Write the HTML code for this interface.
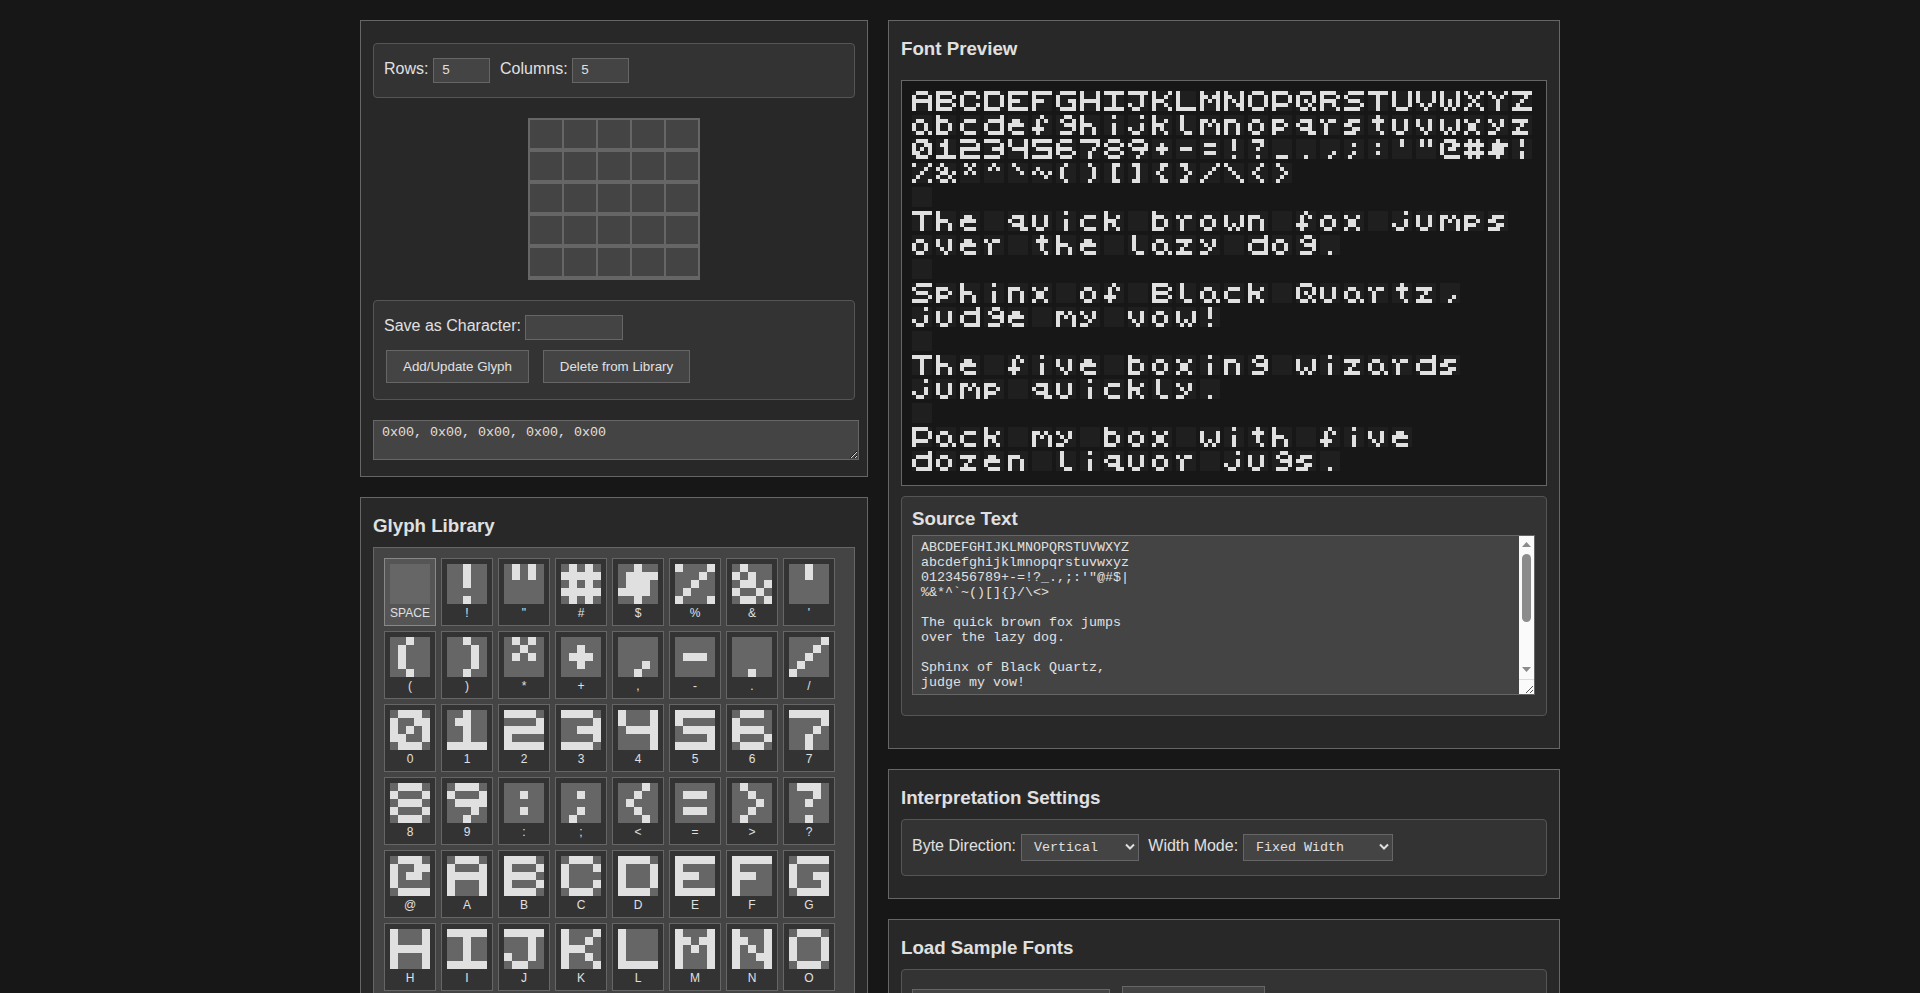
<!DOCTYPE html>
<html><head><meta charset="utf-8"><title>Pixel Font Editor</title>
<style>
html,body{margin:0;padding:0}
body{width:1920px;height:993px;overflow:hidden;background:#171717;color:#e0e0e0;font-family:"Liberation Sans",sans-serif;font-size:16px;position:relative}
*{box-sizing:border-box}
.panel{position:absolute;background:#282828;border:1px solid #666}
.box{position:absolute;background:#333;border:1px solid #555;border-radius:4px}
.abs{position:absolute}
h2{position:absolute;margin:0;font-size:18.72px;font-weight:bold;line-height:20px;white-space:nowrap}
.lbl{position:absolute;font-size:16px;line-height:18px;white-space:nowrap}
.inp{position:absolute;background:#444;border:1px solid #666;font-family:"Liberation Mono",monospace;font-size:13.333px;line-height:15px;padding:4px 8px;color:#e0e0e0;white-space:pre}
.btn{position:absolute;background:#444;border:1px solid #666;font-family:"Liberation Sans",sans-serif;font-size:13.333px;line-height:15px;padding:8px 0;color:#e0e0e0;text-align:center;white-space:nowrap}
.grid{position:absolute;left:528px;top:118px;width:172px;height:162px;background:#666}
.grid i{position:absolute;width:32px;height:28px;background:#444;display:block}
.lib{position:absolute;left:373px;top:547px;width:482px;height:600px;background:#444;border:1px solid #666;padding:10px;display:flex;flex-wrap:wrap;gap:5px;align-content:flex-start}
.gi{width:52px;height:68px;background:#333;border:1px solid #666;padding:5px;}
.gi svg{display:block}
.gi.sel{background:#555;border-color:#888}
.gl{font-size:12px;line-height:14px;margin-top:2px;text-align:center;white-space:nowrap}
.pvbox{position:absolute;left:901px;top:80px;width:646px;height:406px;background:#171717;border:1px solid #666}
.pv{position:absolute;left:10px;top:10px;display:block}
.ta{position:absolute;background:#444;border:1px solid #666;font-family:"Liberation Mono",monospace;font-size:13.333px;line-height:15px;color:#e0e0e0;white-space:pre;overflow:hidden}
.sel2{position:absolute;background:#444;border:1px solid #666;font-family:"Liberation Mono",monospace;font-size:13.333px;line-height:15px;color:#e0e0e0;white-space:pre}
</style></head><body>

<!-- left panel 1 : editor -->
<div class="panel" style="left:360px;top:20px;width:508px;height:457px"></div>
<div class="box" style="left:373px;top:43px;width:482px;height:55px"></div>
<div class="lbl" style="left:384px;top:60px">Rows:</div>
<div class="inp" style="left:433px;top:58px;width:57px;height:25px">5</div>
<div class="lbl" style="left:500px;top:60px">Columns:</div>
<div class="inp" style="left:572px;top:58px;width:57px;height:25px">5</div>
<div class="grid"><i style="left:2px;top:2px"></i><i style="left:36px;top:2px"></i><i style="left:70px;top:2px"></i><i style="left:104px;top:2px"></i><i style="left:138px;top:2px"></i><i style="left:2px;top:34px"></i><i style="left:36px;top:34px"></i><i style="left:70px;top:34px"></i><i style="left:104px;top:34px"></i><i style="left:138px;top:34px"></i><i style="left:2px;top:66px"></i><i style="left:36px;top:66px"></i><i style="left:70px;top:66px"></i><i style="left:104px;top:66px"></i><i style="left:138px;top:66px"></i><i style="left:2px;top:98px"></i><i style="left:36px;top:98px"></i><i style="left:70px;top:98px"></i><i style="left:104px;top:98px"></i><i style="left:138px;top:98px"></i><i style="left:2px;top:130px"></i><i style="left:36px;top:130px"></i><i style="left:70px;top:130px"></i><i style="left:104px;top:130px"></i><i style="left:138px;top:130px"></i></div>
<div class="box" style="left:373px;top:300px;width:482px;height:100px"></div>
<div class="lbl" style="left:384px;top:317px">Save as Character:</div>
<div class="inp" style="left:525px;top:315px;width:98px;height:25px"></div>
<div class="btn" style="left:386px;top:350px;width:143px;height:33px">Add/Update Glyph</div>
<div class="btn" style="left:543px;top:350px;width:147px;height:33px">Delete from Library</div>
<div class="ta" style="left:373px;top:420px;width:486px;height:40px;padding:4px 8px">0x00, 0x00, 0x00, 0x00, 0x00</div>
<svg class="abs" style="left:850px;top:451px" width="7" height="7" viewBox="0 0 7 7" shape-rendering="crispEdges"><path fill="#161616" d="M0 6h1v1h-1zM1 5h1v1h-1zM2 4h1v1h-1zM3 3h1v1h-1zM4 2h1v1h-1zM5 1h1v1h-1zM6 0h1v1h-1zM4 6h1v1h-1zM5 5h1v1h-1zM6 4h1v1h-1z"/><path fill="#d8d8d8" d="M1 6h1v1h-1zM2 5h1v1h-1zM3 4h1v1h-1zM4 3h1v1h-1zM5 2h1v1h-1zM6 1h1v1h-1zM5 6h1v1h-1zM6 5h1v1h-1z"/></svg>

<!-- left panel 2 : library -->
<div class="panel" style="left:360px;top:497px;width:508px;height:600px"></div>
<h2 style="left:373px;top:516px">Glyph Library</h2>
<div class="lib"><div class="gi sel"><svg width="40" height="40" viewBox="0 0 40 40" shape-rendering="crispEdges"><rect width="40" height="40" fill="#666"/><path fill="#e0e0e0" d=""/></svg><div class="gl">SPACE</div></div><div class="gi"><svg width="40" height="40" viewBox="0 0 40 40" shape-rendering="crispEdges"><rect width="40" height="40" fill="#666"/><path fill="#e0e0e0" d="M16 0h8v8h-8zM16 8h8v8h-8zM16 16h8v8h-8zM16 32h8v8h-8z"/></svg><div class="gl">!</div></div><div class="gi"><svg width="40" height="40" viewBox="0 0 40 40" shape-rendering="crispEdges"><rect width="40" height="40" fill="#666"/><path fill="#e0e0e0" d="M8 0h8v8h-8zM24 0h8v8h-8zM8 8h8v8h-8zM24 8h8v8h-8z"/></svg><div class="gl">&quot;</div></div><div class="gi"><svg width="40" height="40" viewBox="0 0 40 40" shape-rendering="crispEdges"><rect width="40" height="40" fill="#666"/><path fill="#e0e0e0" d="M8 0h8v8h-8zM24 0h8v8h-8zM0 8h40v8h-40zM8 16h8v8h-8zM24 16h8v8h-8zM0 24h40v8h-40zM8 32h8v8h-8zM24 32h8v8h-8z"/></svg><div class="gl">#</div></div><div class="gi"><svg width="40" height="40" viewBox="0 0 40 40" shape-rendering="crispEdges"><rect width="40" height="40" fill="#666"/><path fill="#e0e0e0" d="M16 0h8v8h-8zM8 8h32v8h-32zM8 16h24v8h-24zM0 24h32v8h-32zM16 32h8v8h-8z"/></svg><div class="gl">$</div></div><div class="gi"><svg width="40" height="40" viewBox="0 0 40 40" shape-rendering="crispEdges"><rect width="40" height="40" fill="#666"/><path fill="#e0e0e0" d="M0 0h8v8h-8zM32 0h8v8h-8zM24 8h8v8h-8zM16 16h8v8h-8zM8 24h8v8h-8zM0 32h8v8h-8zM32 32h8v8h-8z"/></svg><div class="gl">%</div></div><div class="gi"><svg width="40" height="40" viewBox="0 0 40 40" shape-rendering="crispEdges"><rect width="40" height="40" fill="#666"/><path fill="#e0e0e0" d="M8 0h8v8h-8zM0 8h8v8h-8zM16 8h8v8h-8zM8 16h16v8h-16zM32 16h8v8h-8zM0 24h8v8h-8zM24 24h8v8h-8zM8 32h16v8h-16zM32 32h8v8h-8z"/></svg><div class="gl">&amp;</div></div><div class="gi"><svg width="40" height="40" viewBox="0 0 40 40" shape-rendering="crispEdges"><rect width="40" height="40" fill="#666"/><path fill="#e0e0e0" d="M16 0h8v8h-8zM16 8h8v8h-8z"/></svg><div class="gl">&#x27;</div></div><div class="gi"><svg width="40" height="40" viewBox="0 0 40 40" shape-rendering="crispEdges"><rect width="40" height="40" fill="#666"/><path fill="#e0e0e0" d="M16 0h8v8h-8zM8 8h8v8h-8zM8 16h8v8h-8zM8 24h8v8h-8zM16 32h8v8h-8z"/></svg><div class="gl">(</div></div><div class="gi"><svg width="40" height="40" viewBox="0 0 40 40" shape-rendering="crispEdges"><rect width="40" height="40" fill="#666"/><path fill="#e0e0e0" d="M16 0h8v8h-8zM24 8h8v8h-8zM24 16h8v8h-8zM24 24h8v8h-8zM16 32h8v8h-8z"/></svg><div class="gl">)</div></div><div class="gi"><svg width="40" height="40" viewBox="0 0 40 40" shape-rendering="crispEdges"><rect width="40" height="40" fill="#666"/><path fill="#e0e0e0" d="M8 0h8v8h-8zM24 0h8v8h-8zM16 8h8v8h-8zM8 16h8v8h-8zM24 16h8v8h-8z"/></svg><div class="gl">*</div></div><div class="gi"><svg width="40" height="40" viewBox="0 0 40 40" shape-rendering="crispEdges"><rect width="40" height="40" fill="#666"/><path fill="#e0e0e0" d="M16 8h8v8h-8zM8 16h24v8h-24zM16 24h8v8h-8z"/></svg><div class="gl">+</div></div><div class="gi"><svg width="40" height="40" viewBox="0 0 40 40" shape-rendering="crispEdges"><rect width="40" height="40" fill="#666"/><path fill="#e0e0e0" d="M24 24h8v8h-8zM16 32h8v8h-8z"/></svg><div class="gl">,</div></div><div class="gi"><svg width="40" height="40" viewBox="0 0 40 40" shape-rendering="crispEdges"><rect width="40" height="40" fill="#666"/><path fill="#e0e0e0" d="M8 16h24v8h-24z"/></svg><div class="gl">-</div></div><div class="gi"><svg width="40" height="40" viewBox="0 0 40 40" shape-rendering="crispEdges"><rect width="40" height="40" fill="#666"/><path fill="#e0e0e0" d="M16 32h8v8h-8z"/></svg><div class="gl">.</div></div><div class="gi"><svg width="40" height="40" viewBox="0 0 40 40" shape-rendering="crispEdges"><rect width="40" height="40" fill="#666"/><path fill="#e0e0e0" d="M32 0h8v8h-8zM24 8h8v8h-8zM16 16h8v8h-8zM8 24h8v8h-8zM0 32h8v8h-8z"/></svg><div class="gl">/</div></div><div class="gi"><svg width="40" height="40" viewBox="0 0 40 40" shape-rendering="crispEdges"><rect width="40" height="40" fill="#666"/><path fill="#e0e0e0" d="M8 0h24v8h-24zM0 8h8v8h-8zM24 8h16v8h-16zM0 16h8v8h-8zM16 16h8v8h-8zM32 16h8v8h-8zM0 24h16v8h-16zM32 24h8v8h-8zM8 32h24v8h-24z"/></svg><div class="gl">0</div></div><div class="gi"><svg width="40" height="40" viewBox="0 0 40 40" shape-rendering="crispEdges"><rect width="40" height="40" fill="#666"/><path fill="#e0e0e0" d="M16 0h8v8h-8zM8 8h16v8h-16zM16 16h8v8h-8zM16 24h8v8h-8zM0 32h40v8h-40z"/></svg><div class="gl">1</div></div><div class="gi"><svg width="40" height="40" viewBox="0 0 40 40" shape-rendering="crispEdges"><rect width="40" height="40" fill="#666"/><path fill="#e0e0e0" d="M0 0h32v8h-32zM32 8h8v8h-8zM0 16h40v8h-40zM0 24h8v8h-8zM0 32h40v8h-40z"/></svg><div class="gl">2</div></div><div class="gi"><svg width="40" height="40" viewBox="0 0 40 40" shape-rendering="crispEdges"><rect width="40" height="40" fill="#666"/><path fill="#e0e0e0" d="M0 0h32v8h-32zM32 8h8v8h-8zM16 16h24v8h-24zM32 24h8v8h-8zM0 32h32v8h-32z"/></svg><div class="gl">3</div></div><div class="gi"><svg width="40" height="40" viewBox="0 0 40 40" shape-rendering="crispEdges"><rect width="40" height="40" fill="#666"/><path fill="#e0e0e0" d="M0 0h8v8h-8zM32 0h8v8h-8zM0 8h8v8h-8zM32 8h8v8h-8zM8 16h32v8h-32zM32 24h8v8h-8zM32 32h8v8h-8z"/></svg><div class="gl">4</div></div><div class="gi"><svg width="40" height="40" viewBox="0 0 40 40" shape-rendering="crispEdges"><rect width="40" height="40" fill="#666"/><path fill="#e0e0e0" d="M0 0h40v8h-40zM0 8h8v8h-8zM8 16h32v8h-32zM32 24h8v8h-8zM0 32h40v8h-40z"/></svg><div class="gl">5</div></div><div class="gi"><svg width="40" height="40" viewBox="0 0 40 40" shape-rendering="crispEdges"><rect width="40" height="40" fill="#666"/><path fill="#e0e0e0" d="M8 0h24v8h-24zM0 8h8v8h-8zM0 16h32v8h-32zM0 24h8v8h-8zM32 24h8v8h-8zM8 32h24v8h-24z"/></svg><div class="gl">6</div></div><div class="gi"><svg width="40" height="40" viewBox="0 0 40 40" shape-rendering="crispEdges"><rect width="40" height="40" fill="#666"/><path fill="#e0e0e0" d="M0 0h40v8h-40zM32 8h8v8h-8zM24 16h8v8h-8zM16 24h8v8h-8zM16 32h8v8h-8z"/></svg><div class="gl">7</div></div><div class="gi"><svg width="40" height="40" viewBox="0 0 40 40" shape-rendering="crispEdges"><rect width="40" height="40" fill="#666"/><path fill="#e0e0e0" d="M8 0h24v8h-24zM0 8h8v8h-8zM32 8h8v8h-8zM8 16h24v8h-24zM0 24h8v8h-8zM32 24h8v8h-8zM8 32h24v8h-24z"/></svg><div class="gl">8</div></div><div class="gi"><svg width="40" height="40" viewBox="0 0 40 40" shape-rendering="crispEdges"><rect width="40" height="40" fill="#666"/><path fill="#e0e0e0" d="M8 0h24v8h-24zM0 8h8v8h-8zM32 8h8v8h-8zM8 16h32v8h-32zM24 24h8v8h-8zM16 32h8v8h-8z"/></svg><div class="gl">9</div></div><div class="gi"><svg width="40" height="40" viewBox="0 0 40 40" shape-rendering="crispEdges"><rect width="40" height="40" fill="#666"/><path fill="#e0e0e0" d="M16 8h8v8h-8zM16 24h8v8h-8z"/></svg><div class="gl">:</div></div><div class="gi"><svg width="40" height="40" viewBox="0 0 40 40" shape-rendering="crispEdges"><rect width="40" height="40" fill="#666"/><path fill="#e0e0e0" d="M16 8h8v8h-8zM16 24h8v8h-8zM8 32h8v8h-8z"/></svg><div class="gl">;</div></div><div class="gi"><svg width="40" height="40" viewBox="0 0 40 40" shape-rendering="crispEdges"><rect width="40" height="40" fill="#666"/><path fill="#e0e0e0" d="M24 0h8v8h-8zM16 8h8v8h-8zM8 16h8v8h-8zM16 24h8v8h-8zM24 32h8v8h-8z"/></svg><div class="gl">&lt;</div></div><div class="gi"><svg width="40" height="40" viewBox="0 0 40 40" shape-rendering="crispEdges"><rect width="40" height="40" fill="#666"/><path fill="#e0e0e0" d="M8 8h24v8h-24zM8 24h24v8h-24z"/></svg><div class="gl">=</div></div><div class="gi"><svg width="40" height="40" viewBox="0 0 40 40" shape-rendering="crispEdges"><rect width="40" height="40" fill="#666"/><path fill="#e0e0e0" d="M8 0h8v8h-8zM16 8h8v8h-8zM24 16h8v8h-8zM16 24h8v8h-8zM8 32h8v8h-8z"/></svg><div class="gl">&gt;</div></div><div class="gi"><svg width="40" height="40" viewBox="0 0 40 40" shape-rendering="crispEdges"><rect width="40" height="40" fill="#666"/><path fill="#e0e0e0" d="M8 0h24v8h-24zM24 8h8v8h-8zM16 16h8v8h-8zM16 32h8v8h-8z"/></svg><div class="gl">?</div></div><div class="gi"><svg width="40" height="40" viewBox="0 0 40 40" shape-rendering="crispEdges"><rect width="40" height="40" fill="#666"/><path fill="#e0e0e0" d="M8 0h24v8h-24zM0 8h8v8h-8zM24 8h16v8h-16zM0 16h8v8h-8zM16 16h16v8h-16zM0 24h8v8h-8zM8 32h32v8h-32z"/></svg><div class="gl">@</div></div><div class="gi"><svg width="40" height="40" viewBox="0 0 40 40" shape-rendering="crispEdges"><rect width="40" height="40" fill="#666"/><path fill="#e0e0e0" d="M8 0h24v8h-24zM0 8h8v8h-8zM32 8h8v8h-8zM0 16h40v8h-40zM0 24h8v8h-8zM32 24h8v8h-8zM0 32h8v8h-8zM32 32h8v8h-8z"/></svg><div class="gl">A</div></div><div class="gi"><svg width="40" height="40" viewBox="0 0 40 40" shape-rendering="crispEdges"><rect width="40" height="40" fill="#666"/><path fill="#e0e0e0" d="M0 0h32v8h-32zM0 8h8v8h-8zM32 8h8v8h-8zM0 16h32v8h-32zM0 24h8v8h-8zM32 24h8v8h-8zM0 32h32v8h-32z"/></svg><div class="gl">B</div></div><div class="gi"><svg width="40" height="40" viewBox="0 0 40 40" shape-rendering="crispEdges"><rect width="40" height="40" fill="#666"/><path fill="#e0e0e0" d="M8 0h24v8h-24zM0 8h8v8h-8zM32 8h8v8h-8zM0 16h8v8h-8zM0 24h8v8h-8zM32 24h8v8h-8zM8 32h24v8h-24z"/></svg><div class="gl">C</div></div><div class="gi"><svg width="40" height="40" viewBox="0 0 40 40" shape-rendering="crispEdges"><rect width="40" height="40" fill="#666"/><path fill="#e0e0e0" d="M0 0h32v8h-32zM0 8h8v8h-8zM32 8h8v8h-8zM0 16h8v8h-8zM32 16h8v8h-8zM0 24h8v8h-8zM32 24h8v8h-8zM0 32h32v8h-32z"/></svg><div class="gl">D</div></div><div class="gi"><svg width="40" height="40" viewBox="0 0 40 40" shape-rendering="crispEdges"><rect width="40" height="40" fill="#666"/><path fill="#e0e0e0" d="M0 0h40v8h-40zM0 8h8v8h-8zM0 16h24v8h-24zM0 24h8v8h-8zM0 32h40v8h-40z"/></svg><div class="gl">E</div></div><div class="gi"><svg width="40" height="40" viewBox="0 0 40 40" shape-rendering="crispEdges"><rect width="40" height="40" fill="#666"/><path fill="#e0e0e0" d="M0 0h40v8h-40zM0 8h8v8h-8zM0 16h24v8h-24zM0 24h8v8h-8zM0 32h8v8h-8z"/></svg><div class="gl">F</div></div><div class="gi"><svg width="40" height="40" viewBox="0 0 40 40" shape-rendering="crispEdges"><rect width="40" height="40" fill="#666"/><path fill="#e0e0e0" d="M8 0h32v8h-32zM0 8h8v8h-8zM0 16h8v8h-8zM24 16h16v8h-16zM0 24h8v8h-8zM32 24h8v8h-8zM8 32h32v8h-32z"/></svg><div class="gl">G</div></div><div class="gi"><svg width="40" height="40" viewBox="0 0 40 40" shape-rendering="crispEdges"><rect width="40" height="40" fill="#666"/><path fill="#e0e0e0" d="M0 0h8v8h-8zM32 0h8v8h-8zM0 8h8v8h-8zM32 8h8v8h-8zM0 16h40v8h-40zM0 24h8v8h-8zM32 24h8v8h-8zM0 32h8v8h-8zM32 32h8v8h-8z"/></svg><div class="gl">H</div></div><div class="gi"><svg width="40" height="40" viewBox="0 0 40 40" shape-rendering="crispEdges"><rect width="40" height="40" fill="#666"/><path fill="#e0e0e0" d="M0 0h40v8h-40zM16 8h8v8h-8zM16 16h8v8h-8zM16 24h8v8h-8zM0 32h40v8h-40z"/></svg><div class="gl">I</div></div><div class="gi"><svg width="40" height="40" viewBox="0 0 40 40" shape-rendering="crispEdges"><rect width="40" height="40" fill="#666"/><path fill="#e0e0e0" d="M0 0h40v8h-40zM24 8h8v8h-8zM24 16h8v8h-8zM0 24h8v8h-8zM24 24h8v8h-8zM8 32h16v8h-16z"/></svg><div class="gl">J</div></div><div class="gi"><svg width="40" height="40" viewBox="0 0 40 40" shape-rendering="crispEdges"><rect width="40" height="40" fill="#666"/><path fill="#e0e0e0" d="M0 0h8v8h-8zM32 0h8v8h-8zM0 8h8v8h-8zM24 8h8v8h-8zM0 16h24v8h-24zM0 24h8v8h-8zM24 24h8v8h-8zM0 32h8v8h-8zM32 32h8v8h-8z"/></svg><div class="gl">K</div></div><div class="gi"><svg width="40" height="40" viewBox="0 0 40 40" shape-rendering="crispEdges"><rect width="40" height="40" fill="#666"/><path fill="#e0e0e0" d="M0 0h8v8h-8zM0 8h8v8h-8zM0 16h8v8h-8zM0 24h8v8h-8zM0 32h40v8h-40z"/></svg><div class="gl">L</div></div><div class="gi"><svg width="40" height="40" viewBox="0 0 40 40" shape-rendering="crispEdges"><rect width="40" height="40" fill="#666"/><path fill="#e0e0e0" d="M0 0h8v8h-8zM32 0h8v8h-8zM0 8h16v8h-16zM24 8h16v8h-16zM0 16h8v8h-8zM16 16h8v8h-8zM32 16h8v8h-8zM0 24h8v8h-8zM32 24h8v8h-8zM0 32h8v8h-8zM32 32h8v8h-8z"/></svg><div class="gl">M</div></div><div class="gi"><svg width="40" height="40" viewBox="0 0 40 40" shape-rendering="crispEdges"><rect width="40" height="40" fill="#666"/><path fill="#e0e0e0" d="M0 0h8v8h-8zM32 0h8v8h-8zM0 8h16v8h-16zM32 8h8v8h-8zM0 16h8v8h-8zM16 16h8v8h-8zM32 16h8v8h-8zM0 24h8v8h-8zM24 24h16v8h-16zM0 32h8v8h-8zM32 32h8v8h-8z"/></svg><div class="gl">N</div></div><div class="gi"><svg width="40" height="40" viewBox="0 0 40 40" shape-rendering="crispEdges"><rect width="40" height="40" fill="#666"/><path fill="#e0e0e0" d="M8 0h24v8h-24zM0 8h8v8h-8zM32 8h8v8h-8zM0 16h8v8h-8zM32 16h8v8h-8zM0 24h8v8h-8zM32 24h8v8h-8zM8 32h24v8h-24z"/></svg><div class="gl">O</div></div><div class="gi"><svg width="40" height="40" viewBox="0 0 40 40" shape-rendering="crispEdges"><rect width="40" height="40" fill="#666"/><path fill="#e0e0e0" d="M0 0h32v8h-32zM0 8h8v8h-8zM32 8h8v8h-8zM0 16h8v8h-8zM32 16h8v8h-8zM0 24h32v8h-32zM0 32h8v8h-8z"/></svg><div class="gl">P</div></div><div class="gi"><svg width="40" height="40" viewBox="0 0 40 40" shape-rendering="crispEdges"><rect width="40" height="40" fill="#666"/><path fill="#e0e0e0" d="M8 0h24v8h-24zM0 8h8v8h-8zM32 8h8v8h-8zM0 16h8v8h-8zM16 16h8v8h-8zM32 16h8v8h-8zM0 24h8v8h-8zM24 24h8v8h-8zM8 32h16v8h-16zM32 32h8v8h-8z"/></svg><div class="gl">Q</div></div><div class="gi"><svg width="40" height="40" viewBox="0 0 40 40" shape-rendering="crispEdges"><rect width="40" height="40" fill="#666"/><path fill="#e0e0e0" d="M0 0h32v8h-32zM0 8h8v8h-8zM32 8h8v8h-8zM0 16h32v8h-32zM0 24h8v8h-8zM24 24h8v8h-8zM0 32h8v8h-8zM32 32h8v8h-8z"/></svg><div class="gl">R</div></div><div class="gi"><svg width="40" height="40" viewBox="0 0 40 40" shape-rendering="crispEdges"><rect width="40" height="40" fill="#666"/><path fill="#e0e0e0" d="M8 0h32v8h-32zM0 8h8v8h-8zM8 16h24v8h-24zM32 24h8v8h-8zM0 32h32v8h-32z"/></svg><div class="gl">S</div></div><div class="gi"><svg width="40" height="40" viewBox="0 0 40 40" shape-rendering="crispEdges"><rect width="40" height="40" fill="#666"/><path fill="#e0e0e0" d="M0 0h40v8h-40zM16 8h8v8h-8zM16 16h8v8h-8zM16 24h8v8h-8zM16 32h8v8h-8z"/></svg><div class="gl">T</div></div><div class="gi"><svg width="40" height="40" viewBox="0 0 40 40" shape-rendering="crispEdges"><rect width="40" height="40" fill="#666"/><path fill="#e0e0e0" d="M0 0h8v8h-8zM32 0h8v8h-8zM0 8h8v8h-8zM32 8h8v8h-8zM0 16h8v8h-8zM32 16h8v8h-8zM0 24h8v8h-8zM32 24h8v8h-8zM8 32h24v8h-24z"/></svg><div class="gl">U</div></div><div class="gi"><svg width="40" height="40" viewBox="0 0 40 40" shape-rendering="crispEdges"><rect width="40" height="40" fill="#666"/><path fill="#e0e0e0" d="M0 0h8v8h-8zM32 0h8v8h-8zM0 8h8v8h-8zM32 8h8v8h-8zM0 16h8v8h-8zM32 16h8v8h-8zM8 24h8v8h-8zM24 24h8v8h-8zM16 32h8v8h-8z"/></svg><div class="gl">V</div></div><div class="gi"><svg width="40" height="40" viewBox="0 0 40 40" shape-rendering="crispEdges"><rect width="40" height="40" fill="#666"/><path fill="#e0e0e0" d="M0 0h8v8h-8zM32 0h8v8h-8zM0 8h8v8h-8zM32 8h8v8h-8zM0 16h8v8h-8zM16 16h8v8h-8zM32 16h8v8h-8zM0 24h8v8h-8zM16 24h8v8h-8zM32 24h8v8h-8zM8 32h8v8h-8zM24 32h8v8h-8z"/></svg><div class="gl">W</div></div></div>

<!-- right panel 1 : preview -->
<div class="panel" style="left:888px;top:20px;width:672px;height:729px"></div>
<h2 style="left:901px;top:39px">Font Preview</h2>
<div class="pvbox"><svg class="pv" width="624" height="384" viewBox="0 0 624 384" shape-rendering="crispEdges"><path fill="#1f1f1f" d="M0 0h20v20h-20zM24 0h20v20h-20zM48 0h20v20h-20zM72 0h20v20h-20zM96 0h20v20h-20zM120 0h20v20h-20zM144 0h20v20h-20zM168 0h20v20h-20zM192 0h20v20h-20zM216 0h20v20h-20zM240 0h20v20h-20zM264 0h20v20h-20zM288 0h20v20h-20zM312 0h20v20h-20zM336 0h20v20h-20zM360 0h20v20h-20zM384 0h20v20h-20zM408 0h20v20h-20zM432 0h20v20h-20zM456 0h20v20h-20zM480 0h20v20h-20zM504 0h20v20h-20zM528 0h20v20h-20zM552 0h20v20h-20zM576 0h20v20h-20zM600 0h20v20h-20zM0 24h20v20h-20zM24 24h20v20h-20zM48 24h20v20h-20zM72 24h20v20h-20zM96 24h20v20h-20zM120 24h20v20h-20zM144 24h20v20h-20zM168 24h20v20h-20zM192 24h20v20h-20zM216 24h20v20h-20zM240 24h20v20h-20zM264 24h20v20h-20zM288 24h20v20h-20zM312 24h20v20h-20zM336 24h20v20h-20zM360 24h20v20h-20zM384 24h20v20h-20zM408 24h20v20h-20zM432 24h20v20h-20zM456 24h20v20h-20zM480 24h20v20h-20zM504 24h20v20h-20zM528 24h20v20h-20zM552 24h20v20h-20zM576 24h20v20h-20zM600 24h20v20h-20zM0 48h20v20h-20zM24 48h20v20h-20zM48 48h20v20h-20zM72 48h20v20h-20zM96 48h20v20h-20zM120 48h20v20h-20zM144 48h20v20h-20zM168 48h20v20h-20zM192 48h20v20h-20zM216 48h20v20h-20zM240 48h20v20h-20zM264 48h20v20h-20zM288 48h20v20h-20zM312 48h20v20h-20zM336 48h20v20h-20zM360 48h20v20h-20zM384 48h20v20h-20zM408 48h20v20h-20zM432 48h20v20h-20zM456 48h20v20h-20zM480 48h20v20h-20zM504 48h20v20h-20zM528 48h20v20h-20zM552 48h20v20h-20zM576 48h20v20h-20zM600 48h20v20h-20zM0 72h20v20h-20zM24 72h20v20h-20zM48 72h20v20h-20zM72 72h20v20h-20zM96 72h20v20h-20zM120 72h20v20h-20zM144 72h20v20h-20zM168 72h20v20h-20zM192 72h20v20h-20zM216 72h20v20h-20zM240 72h20v20h-20zM264 72h20v20h-20zM288 72h20v20h-20zM312 72h20v20h-20zM336 72h20v20h-20zM360 72h20v20h-20zM0 96h20v20h-20zM0 120h20v20h-20zM24 120h20v20h-20zM48 120h20v20h-20zM72 120h20v20h-20zM96 120h20v20h-20zM120 120h20v20h-20zM144 120h20v20h-20zM168 120h20v20h-20zM192 120h20v20h-20zM216 120h20v20h-20zM240 120h20v20h-20zM264 120h20v20h-20zM288 120h20v20h-20zM312 120h20v20h-20zM336 120h20v20h-20zM360 120h20v20h-20zM384 120h20v20h-20zM408 120h20v20h-20zM432 120h20v20h-20zM456 120h20v20h-20zM480 120h20v20h-20zM504 120h20v20h-20zM528 120h20v20h-20zM552 120h20v20h-20zM576 120h20v20h-20zM0 144h20v20h-20zM24 144h20v20h-20zM48 144h20v20h-20zM72 144h20v20h-20zM96 144h20v20h-20zM120 144h20v20h-20zM144 144h20v20h-20zM168 144h20v20h-20zM192 144h20v20h-20zM216 144h20v20h-20zM240 144h20v20h-20zM264 144h20v20h-20zM288 144h20v20h-20zM312 144h20v20h-20zM336 144h20v20h-20zM360 144h20v20h-20zM384 144h20v20h-20zM408 144h20v20h-20zM0 168h20v20h-20zM0 192h20v20h-20zM24 192h20v20h-20zM48 192h20v20h-20zM72 192h20v20h-20zM96 192h20v20h-20zM120 192h20v20h-20zM144 192h20v20h-20zM168 192h20v20h-20zM192 192h20v20h-20zM216 192h20v20h-20zM240 192h20v20h-20zM264 192h20v20h-20zM288 192h20v20h-20zM312 192h20v20h-20zM336 192h20v20h-20zM360 192h20v20h-20zM384 192h20v20h-20zM408 192h20v20h-20zM432 192h20v20h-20zM456 192h20v20h-20zM480 192h20v20h-20zM504 192h20v20h-20zM528 192h20v20h-20zM0 216h20v20h-20zM24 216h20v20h-20zM48 216h20v20h-20zM72 216h20v20h-20zM96 216h20v20h-20zM120 216h20v20h-20zM144 216h20v20h-20zM168 216h20v20h-20zM192 216h20v20h-20zM216 216h20v20h-20zM240 216h20v20h-20zM264 216h20v20h-20zM288 216h20v20h-20zM0 240h20v20h-20zM0 264h20v20h-20zM24 264h20v20h-20zM48 264h20v20h-20zM72 264h20v20h-20zM96 264h20v20h-20zM120 264h20v20h-20zM144 264h20v20h-20zM168 264h20v20h-20zM192 264h20v20h-20zM216 264h20v20h-20zM240 264h20v20h-20zM264 264h20v20h-20zM288 264h20v20h-20zM312 264h20v20h-20zM336 264h20v20h-20zM360 264h20v20h-20zM384 264h20v20h-20zM408 264h20v20h-20zM432 264h20v20h-20zM456 264h20v20h-20zM480 264h20v20h-20zM504 264h20v20h-20zM528 264h20v20h-20zM0 288h20v20h-20zM24 288h20v20h-20zM48 288h20v20h-20zM72 288h20v20h-20zM96 288h20v20h-20zM120 288h20v20h-20zM144 288h20v20h-20zM168 288h20v20h-20zM192 288h20v20h-20zM216 288h20v20h-20zM240 288h20v20h-20zM264 288h20v20h-20zM288 288h20v20h-20zM0 312h20v20h-20zM0 336h20v20h-20zM24 336h20v20h-20zM48 336h20v20h-20zM72 336h20v20h-20zM96 336h20v20h-20zM120 336h20v20h-20zM144 336h20v20h-20zM168 336h20v20h-20zM192 336h20v20h-20zM216 336h20v20h-20zM240 336h20v20h-20zM264 336h20v20h-20zM288 336h20v20h-20zM312 336h20v20h-20zM336 336h20v20h-20zM360 336h20v20h-20zM384 336h20v20h-20zM408 336h20v20h-20zM432 336h20v20h-20zM456 336h20v20h-20zM480 336h20v20h-20zM0 360h20v20h-20zM24 360h20v20h-20zM48 360h20v20h-20zM72 360h20v20h-20zM96 360h20v20h-20zM120 360h20v20h-20zM144 360h20v20h-20zM168 360h20v20h-20zM192 360h20v20h-20zM216 360h20v20h-20zM240 360h20v20h-20zM264 360h20v20h-20zM288 360h20v20h-20zM312 360h20v20h-20zM336 360h20v20h-20zM360 360h20v20h-20zM384 360h20v20h-20zM408 360h20v20h-20z"/><path fill="#e0e0e0" d="M4 0h12v4h-12zM0 4h4v4h-4zM16 4h4v4h-4zM0 8h20v4h-20zM0 12h4v4h-4zM16 12h4v4h-4zM0 16h4v4h-4zM16 16h4v4h-4zM24 0h16v4h-16zM24 4h4v4h-4zM40 4h4v4h-4zM24 8h16v4h-16zM24 12h4v4h-4zM40 12h4v4h-4zM24 16h16v4h-16zM52 0h12v4h-12zM48 4h4v4h-4zM64 4h4v4h-4zM48 8h4v4h-4zM48 12h4v4h-4zM64 12h4v4h-4zM52 16h12v4h-12zM72 0h16v4h-16zM72 4h4v4h-4zM88 4h4v4h-4zM72 8h4v4h-4zM88 8h4v4h-4zM72 12h4v4h-4zM88 12h4v4h-4zM72 16h16v4h-16zM96 0h20v4h-20zM96 4h4v4h-4zM96 8h12v4h-12zM96 12h4v4h-4zM96 16h20v4h-20zM120 0h20v4h-20zM120 4h4v4h-4zM120 8h12v4h-12zM120 12h4v4h-4zM120 16h4v4h-4zM148 0h16v4h-16zM144 4h4v4h-4zM144 8h4v4h-4zM156 8h8v4h-8zM144 12h4v4h-4zM160 12h4v4h-4zM148 16h16v4h-16zM168 0h4v4h-4zM184 0h4v4h-4zM168 4h4v4h-4zM184 4h4v4h-4zM168 8h20v4h-20zM168 12h4v4h-4zM184 12h4v4h-4zM168 16h4v4h-4zM184 16h4v4h-4zM192 0h20v4h-20zM200 4h4v4h-4zM200 8h4v4h-4zM200 12h4v4h-4zM192 16h20v4h-20zM216 0h20v4h-20zM228 4h4v4h-4zM228 8h4v4h-4zM216 12h4v4h-4zM228 12h4v4h-4zM220 16h8v4h-8zM240 0h4v4h-4zM256 0h4v4h-4zM240 4h4v4h-4zM252 4h4v4h-4zM240 8h12v4h-12zM240 12h4v4h-4zM252 12h4v4h-4zM240 16h4v4h-4zM256 16h4v4h-4zM264 0h4v4h-4zM264 4h4v4h-4zM264 8h4v4h-4zM264 12h4v4h-4zM264 16h20v4h-20zM288 0h4v4h-4zM304 0h4v4h-4zM288 4h8v4h-8zM300 4h8v4h-8zM288 8h4v4h-4zM296 8h4v4h-4zM304 8h4v4h-4zM288 12h4v4h-4zM304 12h4v4h-4zM288 16h4v4h-4zM304 16h4v4h-4zM312 0h4v4h-4zM328 0h4v4h-4zM312 4h8v4h-8zM328 4h4v4h-4zM312 8h4v4h-4zM320 8h4v4h-4zM328 8h4v4h-4zM312 12h4v4h-4zM324 12h8v4h-8zM312 16h4v4h-4zM328 16h4v4h-4zM340 0h12v4h-12zM336 4h4v4h-4zM352 4h4v4h-4zM336 8h4v4h-4zM352 8h4v4h-4zM336 12h4v4h-4zM352 12h4v4h-4zM340 16h12v4h-12zM360 0h16v4h-16zM360 4h4v4h-4zM376 4h4v4h-4zM360 8h4v4h-4zM376 8h4v4h-4zM360 12h16v4h-16zM360 16h4v4h-4zM388 0h12v4h-12zM384 4h4v4h-4zM400 4h4v4h-4zM384 8h4v4h-4zM392 8h4v4h-4zM400 8h4v4h-4zM384 12h4v4h-4zM396 12h4v4h-4zM388 16h8v4h-8zM400 16h4v4h-4zM408 0h16v4h-16zM408 4h4v4h-4zM424 4h4v4h-4zM408 8h16v4h-16zM408 12h4v4h-4zM420 12h4v4h-4zM408 16h4v4h-4zM424 16h4v4h-4zM436 0h16v4h-16zM432 4h4v4h-4zM436 8h12v4h-12zM448 12h4v4h-4zM432 16h16v4h-16zM456 0h20v4h-20zM464 4h4v4h-4zM464 8h4v4h-4zM464 12h4v4h-4zM464 16h4v4h-4zM480 0h4v4h-4zM496 0h4v4h-4zM480 4h4v4h-4zM496 4h4v4h-4zM480 8h4v4h-4zM496 8h4v4h-4zM480 12h4v4h-4zM496 12h4v4h-4zM484 16h12v4h-12zM504 0h4v4h-4zM520 0h4v4h-4zM504 4h4v4h-4zM520 4h4v4h-4zM504 8h4v4h-4zM520 8h4v4h-4zM508 12h4v4h-4zM516 12h4v4h-4zM512 16h4v4h-4zM528 0h4v4h-4zM544 0h4v4h-4zM528 4h4v4h-4zM544 4h4v4h-4zM528 8h4v4h-4zM536 8h4v4h-4zM544 8h4v4h-4zM528 12h4v4h-4zM536 12h4v4h-4zM544 12h4v4h-4zM532 16h4v4h-4zM540 16h4v4h-4zM552 0h4v4h-4zM568 0h4v4h-4zM556 4h4v4h-4zM564 4h4v4h-4zM560 8h4v4h-4zM556 12h4v4h-4zM564 12h4v4h-4zM552 16h4v4h-4zM568 16h4v4h-4zM576 0h4v4h-4zM592 0h4v4h-4zM580 4h4v4h-4zM588 4h4v4h-4zM584 8h4v4h-4zM584 12h4v4h-4zM584 16h4v4h-4zM600 0h20v4h-20zM612 4h4v4h-4zM608 8h4v4h-4zM604 12h4v4h-4zM600 16h20v4h-20zM4 28h8v4h-8zM0 32h4v4h-4zM12 32h4v4h-4zM0 36h4v4h-4zM12 36h4v4h-4zM4 40h8v4h-8zM16 40h4v4h-4zM24 24h4v4h-4zM24 28h12v4h-12zM24 32h4v4h-4zM36 32h4v4h-4zM24 36h4v4h-4zM36 36h4v4h-4zM24 40h12v4h-12zM52 28h12v4h-12zM48 32h4v4h-4zM48 36h4v4h-4zM52 40h12v4h-12zM88 24h4v4h-4zM76 28h16v4h-16zM72 32h4v4h-4zM88 32h4v4h-4zM72 36h4v4h-4zM88 36h4v4h-4zM76 40h16v4h-16zM100 28h8v4h-8zM96 32h16v4h-16zM96 36h4v4h-4zM100 40h12v4h-12zM128 24h4v4h-4zM124 28h4v4h-4zM132 28h4v4h-4zM124 32h4v4h-4zM120 36h12v4h-12zM124 40h4v4h-4zM152 24h8v4h-8zM148 28h4v4h-4zM160 28h4v4h-4zM152 32h12v4h-12zM160 36h4v4h-4zM148 40h12v4h-12zM168 24h4v4h-4zM168 28h4v4h-4zM168 32h12v4h-12zM168 36h4v4h-4zM180 36h4v4h-4zM168 40h4v4h-4zM180 40h4v4h-4zM200 24h4v4h-4zM200 32h4v4h-4zM200 36h4v4h-4zM200 40h4v4h-4zM228 24h4v4h-4zM228 32h4v4h-4zM216 36h4v4h-4zM228 36h4v4h-4zM220 40h8v4h-8zM240 24h4v4h-4zM240 28h4v4h-4zM252 28h4v4h-4zM240 32h12v4h-12zM240 36h4v4h-4zM248 36h4v4h-4zM240 40h4v4h-4zM252 40h4v4h-4zM268 24h4v4h-4zM268 28h4v4h-4zM268 32h4v4h-4zM268 36h4v4h-4zM272 40h8v4h-8zM288 28h8v4h-8zM300 28h4v4h-4zM288 32h4v4h-4zM296 32h4v4h-4zM304 32h4v4h-4zM288 36h4v4h-4zM304 36h4v4h-4zM288 40h4v4h-4zM304 40h4v4h-4zM312 28h12v4h-12zM312 32h4v4h-4zM324 32h4v4h-4zM312 36h4v4h-4zM324 36h4v4h-4zM312 40h4v4h-4zM324 40h4v4h-4zM340 28h8v4h-8zM336 32h4v4h-4zM348 32h4v4h-4zM336 36h4v4h-4zM348 36h4v4h-4zM340 40h8v4h-8zM360 28h12v4h-12zM360 32h4v4h-4zM372 32h4v4h-4zM360 36h12v4h-12zM360 40h4v4h-4zM388 28h12v4h-12zM384 32h4v4h-4zM396 32h4v4h-4zM388 36h12v4h-12zM396 40h8v4h-8zM408 28h4v4h-4zM416 28h8v4h-8zM412 32h4v4h-4zM412 36h4v4h-4zM412 40h4v4h-4zM436 28h12v4h-12zM432 32h8v4h-8zM440 36h8v4h-8zM432 40h12v4h-12zM464 24h4v4h-4zM460 28h12v4h-12zM464 32h4v4h-4zM464 36h4v4h-4zM468 40h4v4h-4zM480 28h4v4h-4zM492 28h4v4h-4zM480 32h4v4h-4zM492 32h4v4h-4zM480 36h4v4h-4zM492 36h4v4h-4zM484 40h8v4h-8zM504 28h4v4h-4zM516 28h4v4h-4zM504 32h4v4h-4zM516 32h4v4h-4zM508 36h4v4h-4zM516 36h4v4h-4zM512 40h4v4h-4zM528 28h4v4h-4zM544 28h4v4h-4zM528 32h4v4h-4zM544 32h4v4h-4zM528 36h4v4h-4zM536 36h4v4h-4zM544 36h4v4h-4zM532 40h4v4h-4zM540 40h4v4h-4zM552 28h4v4h-4zM564 28h4v4h-4zM556 32h8v4h-8zM556 36h8v4h-8zM552 40h4v4h-4zM564 40h4v4h-4zM576 28h4v4h-4zM588 28h4v4h-4zM580 32h4v4h-4zM588 32h4v4h-4zM584 36h4v4h-4zM576 40h8v4h-8zM600 28h16v4h-16zM608 32h4v4h-4zM604 36h4v4h-4zM600 40h16v4h-16zM4 48h12v4h-12zM0 52h4v4h-4zM12 52h8v4h-8zM0 56h4v4h-4zM8 56h4v4h-4zM16 56h4v4h-4zM0 60h8v4h-8zM16 60h4v4h-4zM4 64h12v4h-12zM32 48h4v4h-4zM28 52h8v4h-8zM32 56h4v4h-4zM32 60h4v4h-4zM24 64h20v4h-20zM48 48h16v4h-16zM64 52h4v4h-4zM48 56h20v4h-20zM48 60h4v4h-4zM48 64h20v4h-20zM72 48h16v4h-16zM88 52h4v4h-4zM80 56h12v4h-12zM88 60h4v4h-4zM72 64h16v4h-16zM96 48h4v4h-4zM112 48h4v4h-4zM96 52h4v4h-4zM112 52h4v4h-4zM100 56h16v4h-16zM112 60h4v4h-4zM112 64h4v4h-4zM120 48h20v4h-20zM120 52h4v4h-4zM124 56h16v4h-16zM136 60h4v4h-4zM120 64h20v4h-20zM148 48h12v4h-12zM144 52h4v4h-4zM144 56h16v4h-16zM144 60h4v4h-4zM160 60h4v4h-4zM148 64h12v4h-12zM168 48h20v4h-20zM184 52h4v4h-4zM180 56h4v4h-4zM176 60h4v4h-4zM176 64h4v4h-4zM196 48h12v4h-12zM192 52h4v4h-4zM208 52h4v4h-4zM196 56h12v4h-12zM192 60h4v4h-4zM208 60h4v4h-4zM196 64h12v4h-12zM220 48h12v4h-12zM216 52h4v4h-4zM232 52h4v4h-4zM220 56h16v4h-16zM228 60h4v4h-4zM224 64h4v4h-4zM248 52h4v4h-4zM244 56h12v4h-12zM248 60h4v4h-4zM268 56h12v4h-12zM292 52h12v4h-12zM292 60h12v4h-12zM320 48h4v4h-4zM320 52h4v4h-4zM320 56h4v4h-4zM320 64h4v4h-4zM340 48h12v4h-12zM348 52h4v4h-4zM344 56h4v4h-4zM344 64h4v4h-4zM364 64h12v4h-12zM392 64h4v4h-4zM420 60h4v4h-4zM416 64h4v4h-4zM440 52h4v4h-4zM440 60h4v4h-4zM436 64h4v4h-4zM464 52h4v4h-4zM464 60h4v4h-4zM488 48h4v4h-4zM488 52h4v4h-4zM508 48h4v4h-4zM516 48h4v4h-4zM508 52h4v4h-4zM516 52h4v4h-4zM532 48h12v4h-12zM528 52h4v4h-4zM540 52h8v4h-8zM528 56h4v4h-4zM536 56h8v4h-8zM528 60h4v4h-4zM532 64h16v4h-16zM556 48h4v4h-4zM564 48h4v4h-4zM552 52h20v4h-20zM556 56h4v4h-4zM564 56h4v4h-4zM552 60h20v4h-20zM556 64h4v4h-4zM564 64h4v4h-4zM584 48h4v4h-4zM580 52h16v4h-16zM580 56h12v4h-12zM576 60h16v4h-16zM584 64h4v4h-4zM608 48h4v4h-4zM608 52h4v4h-4zM608 60h4v4h-4zM608 64h4v4h-4zM0 72h4v4h-4zM16 72h4v4h-4zM12 76h4v4h-4zM8 80h4v4h-4zM4 84h4v4h-4zM0 88h4v4h-4zM16 88h4v4h-4zM28 72h4v4h-4zM24 76h4v4h-4zM32 76h4v4h-4zM28 80h8v4h-8zM40 80h4v4h-4zM24 84h4v4h-4zM36 84h4v4h-4zM28 88h8v4h-8zM40 88h4v4h-4zM52 72h4v4h-4zM60 72h4v4h-4zM56 76h4v4h-4zM52 80h4v4h-4zM60 80h4v4h-4zM80 72h4v4h-4zM76 76h4v4h-4zM84 76h4v4h-4zM100 72h4v4h-4zM104 76h4v4h-4zM108 80h4v4h-4zM124 76h4v4h-4zM120 80h4v4h-4zM128 80h4v4h-4zM136 80h4v4h-4zM132 84h4v4h-4zM152 72h4v4h-4zM148 76h4v4h-4zM148 80h4v4h-4zM148 84h4v4h-4zM152 88h4v4h-4zM176 72h4v4h-4zM180 76h4v4h-4zM180 80h4v4h-4zM180 84h4v4h-4zM176 88h4v4h-4zM200 72h8v4h-8zM200 76h4v4h-4zM200 80h4v4h-4zM200 84h4v4h-4zM200 88h8v4h-8zM220 72h8v4h-8zM224 76h4v4h-4zM224 80h4v4h-4zM224 84h4v4h-4zM220 88h8v4h-8zM248 72h8v4h-8zM248 76h4v4h-4zM244 80h4v4h-4zM248 84h4v4h-4zM248 88h8v4h-8zM268 72h8v4h-8zM272 76h4v4h-4zM276 80h4v4h-4zM272 84h4v4h-4zM268 88h8v4h-8zM304 72h4v4h-4zM300 76h4v4h-4zM296 80h4v4h-4zM292 84h4v4h-4zM288 88h4v4h-4zM312 72h4v4h-4zM316 76h4v4h-4zM320 80h4v4h-4zM324 84h4v4h-4zM328 88h4v4h-4zM348 72h4v4h-4zM344 76h4v4h-4zM340 80h4v4h-4zM344 84h4v4h-4zM348 88h4v4h-4zM364 72h4v4h-4zM368 76h4v4h-4zM372 80h4v4h-4zM368 84h4v4h-4zM364 88h4v4h-4zM0 120h20v4h-20zM8 124h4v4h-4zM8 128h4v4h-4zM8 132h4v4h-4zM8 136h4v4h-4zM24 120h4v4h-4zM24 124h4v4h-4zM24 128h12v4h-12zM24 132h4v4h-4zM36 132h4v4h-4zM24 136h4v4h-4zM36 136h4v4h-4zM52 124h8v4h-8zM48 128h16v4h-16zM48 132h4v4h-4zM52 136h12v4h-12zM100 124h12v4h-12zM96 128h4v4h-4zM108 128h4v4h-4zM100 132h12v4h-12zM108 136h8v4h-8zM120 124h4v4h-4zM132 124h4v4h-4zM120 128h4v4h-4zM132 128h4v4h-4zM120 132h4v4h-4zM132 132h4v4h-4zM124 136h8v4h-8zM152 120h4v4h-4zM152 128h4v4h-4zM152 132h4v4h-4zM152 136h4v4h-4zM172 124h12v4h-12zM168 128h4v4h-4zM168 132h4v4h-4zM172 136h12v4h-12zM192 120h4v4h-4zM192 124h4v4h-4zM204 124h4v4h-4zM192 128h12v4h-12zM192 132h4v4h-4zM200 132h4v4h-4zM192 136h4v4h-4zM204 136h4v4h-4zM240 120h4v4h-4zM240 124h12v4h-12zM240 128h4v4h-4zM252 128h4v4h-4zM240 132h4v4h-4zM252 132h4v4h-4zM240 136h12v4h-12zM264 124h4v4h-4zM272 124h8v4h-8zM268 128h4v4h-4zM268 132h4v4h-4zM268 136h4v4h-4zM292 124h8v4h-8zM288 128h4v4h-4zM300 128h4v4h-4zM288 132h4v4h-4zM300 132h4v4h-4zM292 136h8v4h-8zM312 124h4v4h-4zM328 124h4v4h-4zM312 128h4v4h-4zM328 128h4v4h-4zM312 132h4v4h-4zM320 132h4v4h-4zM328 132h4v4h-4zM316 136h4v4h-4zM324 136h4v4h-4zM336 124h12v4h-12zM336 128h4v4h-4zM348 128h4v4h-4zM336 132h4v4h-4zM348 132h4v4h-4zM336 136h4v4h-4zM348 136h4v4h-4zM392 120h4v4h-4zM388 124h4v4h-4zM396 124h4v4h-4zM388 128h4v4h-4zM384 132h12v4h-12zM388 136h4v4h-4zM412 124h8v4h-8zM408 128h4v4h-4zM420 128h4v4h-4zM408 132h4v4h-4zM420 132h4v4h-4zM412 136h8v4h-8zM432 124h4v4h-4zM444 124h4v4h-4zM436 128h8v4h-8zM436 132h8v4h-8zM432 136h4v4h-4zM444 136h4v4h-4zM492 120h4v4h-4zM492 128h4v4h-4zM480 132h4v4h-4zM492 132h4v4h-4zM484 136h8v4h-8zM504 124h4v4h-4zM516 124h4v4h-4zM504 128h4v4h-4zM516 128h4v4h-4zM504 132h4v4h-4zM516 132h4v4h-4zM508 136h8v4h-8zM528 124h8v4h-8zM540 124h4v4h-4zM528 128h4v4h-4zM536 128h4v4h-4zM544 128h4v4h-4zM528 132h4v4h-4zM544 132h4v4h-4zM528 136h4v4h-4zM544 136h4v4h-4zM552 124h12v4h-12zM552 128h4v4h-4zM564 128h4v4h-4zM552 132h12v4h-12zM552 136h4v4h-4zM580 124h12v4h-12zM576 128h8v4h-8zM584 132h8v4h-8zM576 136h12v4h-12zM4 148h8v4h-8zM0 152h4v4h-4zM12 152h4v4h-4zM0 156h4v4h-4zM12 156h4v4h-4zM4 160h8v4h-8zM24 148h4v4h-4zM36 148h4v4h-4zM24 152h4v4h-4zM36 152h4v4h-4zM28 156h4v4h-4zM36 156h4v4h-4zM32 160h4v4h-4zM52 148h8v4h-8zM48 152h16v4h-16zM48 156h4v4h-4zM52 160h12v4h-12zM72 148h4v4h-4zM80 148h8v4h-8zM76 152h4v4h-4zM76 156h4v4h-4zM76 160h4v4h-4zM128 144h4v4h-4zM124 148h12v4h-12zM128 152h4v4h-4zM128 156h4v4h-4zM132 160h4v4h-4zM144 144h4v4h-4zM144 148h4v4h-4zM144 152h12v4h-12zM144 156h4v4h-4zM156 156h4v4h-4zM144 160h4v4h-4zM156 160h4v4h-4zM172 148h8v4h-8zM168 152h16v4h-16zM168 156h4v4h-4zM172 160h12v4h-12zM220 144h4v4h-4zM220 148h4v4h-4zM220 152h4v4h-4zM220 156h4v4h-4zM224 160h8v4h-8zM244 148h8v4h-8zM240 152h4v4h-4zM252 152h4v4h-4zM240 156h4v4h-4zM252 156h4v4h-4zM244 160h8v4h-8zM256 160h4v4h-4zM264 148h16v4h-16zM272 152h4v4h-4zM268 156h4v4h-4zM264 160h16v4h-16zM288 148h4v4h-4zM300 148h4v4h-4zM292 152h4v4h-4zM300 152h4v4h-4zM296 156h4v4h-4zM288 160h8v4h-8zM352 144h4v4h-4zM340 148h16v4h-16zM336 152h4v4h-4zM352 152h4v4h-4zM336 156h4v4h-4zM352 156h4v4h-4zM340 160h16v4h-16zM364 148h8v4h-8zM360 152h4v4h-4zM372 152h4v4h-4zM360 156h4v4h-4zM372 156h4v4h-4zM364 160h8v4h-8zM392 144h8v4h-8zM388 148h4v4h-4zM400 148h4v4h-4zM392 152h12v4h-12zM400 156h4v4h-4zM388 160h12v4h-12zM416 160h4v4h-4zM4 192h16v4h-16zM0 196h4v4h-4zM4 200h12v4h-12zM16 204h4v4h-4zM0 208h16v4h-16zM24 196h12v4h-12zM24 200h4v4h-4zM36 200h4v4h-4zM24 204h12v4h-12zM24 208h4v4h-4zM48 192h4v4h-4zM48 196h4v4h-4zM48 200h12v4h-12zM48 204h4v4h-4zM60 204h4v4h-4zM48 208h4v4h-4zM60 208h4v4h-4zM80 192h4v4h-4zM80 200h4v4h-4zM80 204h4v4h-4zM80 208h4v4h-4zM96 196h12v4h-12zM96 200h4v4h-4zM108 200h4v4h-4zM96 204h4v4h-4zM108 204h4v4h-4zM96 208h4v4h-4zM108 208h4v4h-4zM120 196h4v4h-4zM132 196h4v4h-4zM124 200h8v4h-8zM124 204h8v4h-8zM120 208h4v4h-4zM132 208h4v4h-4zM172 196h8v4h-8zM168 200h4v4h-4zM180 200h4v4h-4zM168 204h4v4h-4zM180 204h4v4h-4zM172 208h8v4h-8zM200 192h4v4h-4zM196 196h4v4h-4zM204 196h4v4h-4zM196 200h4v4h-4zM192 204h12v4h-12zM196 208h4v4h-4zM240 192h16v4h-16zM240 196h4v4h-4zM256 196h4v4h-4zM240 200h16v4h-16zM240 204h4v4h-4zM256 204h4v4h-4zM240 208h16v4h-16zM268 192h4v4h-4zM268 196h4v4h-4zM268 200h4v4h-4zM268 204h4v4h-4zM272 208h8v4h-8zM292 196h8v4h-8zM288 200h4v4h-4zM300 200h4v4h-4zM288 204h4v4h-4zM300 204h4v4h-4zM292 208h8v4h-8zM304 208h4v4h-4zM316 196h12v4h-12zM312 200h4v4h-4zM312 204h4v4h-4zM316 208h12v4h-12zM336 192h4v4h-4zM336 196h4v4h-4zM348 196h4v4h-4zM336 200h12v4h-12zM336 204h4v4h-4zM344 204h4v4h-4zM336 208h4v4h-4zM348 208h4v4h-4zM388 192h12v4h-12zM384 196h4v4h-4zM400 196h4v4h-4zM384 200h4v4h-4zM392 200h4v4h-4zM400 200h4v4h-4zM384 204h4v4h-4zM396 204h4v4h-4zM388 208h8v4h-8zM400 208h4v4h-4zM408 196h4v4h-4zM420 196h4v4h-4zM408 200h4v4h-4zM420 200h4v4h-4zM408 204h4v4h-4zM420 204h4v4h-4zM412 208h8v4h-8zM436 196h8v4h-8zM432 200h4v4h-4zM444 200h4v4h-4zM432 204h4v4h-4zM444 204h4v4h-4zM436 208h8v4h-8zM448 208h4v4h-4zM456 196h4v4h-4zM464 196h8v4h-8zM460 200h4v4h-4zM460 204h4v4h-4zM460 208h4v4h-4zM488 192h4v4h-4zM484 196h12v4h-12zM488 200h4v4h-4zM488 204h4v4h-4zM492 208h4v4h-4zM504 196h16v4h-16zM512 200h4v4h-4zM508 204h4v4h-4zM504 208h16v4h-16zM540 204h4v4h-4zM536 208h4v4h-4zM12 216h4v4h-4zM12 224h4v4h-4zM0 228h4v4h-4zM12 228h4v4h-4zM4 232h8v4h-8zM24 220h4v4h-4zM36 220h4v4h-4zM24 224h4v4h-4zM36 224h4v4h-4zM24 228h4v4h-4zM36 228h4v4h-4zM28 232h8v4h-8zM64 216h4v4h-4zM52 220h16v4h-16zM48 224h4v4h-4zM64 224h4v4h-4zM48 228h4v4h-4zM64 228h4v4h-4zM52 232h16v4h-16zM80 216h8v4h-8zM76 220h4v4h-4zM88 220h4v4h-4zM80 224h12v4h-12zM88 228h4v4h-4zM76 232h12v4h-12zM100 220h8v4h-8zM96 224h16v4h-16zM96 228h4v4h-4zM100 232h12v4h-12zM144 220h8v4h-8zM156 220h4v4h-4zM144 224h4v4h-4zM152 224h4v4h-4zM160 224h4v4h-4zM144 228h4v4h-4zM160 228h4v4h-4zM144 232h4v4h-4zM160 232h4v4h-4zM168 220h4v4h-4zM180 220h4v4h-4zM172 224h4v4h-4zM180 224h4v4h-4zM176 228h4v4h-4zM168 232h8v4h-8zM216 220h4v4h-4zM228 220h4v4h-4zM216 224h4v4h-4zM228 224h4v4h-4zM220 228h4v4h-4zM228 228h4v4h-4zM224 232h4v4h-4zM244 220h8v4h-8zM240 224h4v4h-4zM252 224h4v4h-4zM240 228h4v4h-4zM252 228h4v4h-4zM244 232h8v4h-8zM264 220h4v4h-4zM280 220h4v4h-4zM264 224h4v4h-4zM280 224h4v4h-4zM264 228h4v4h-4zM272 228h4v4h-4zM280 228h4v4h-4zM268 232h4v4h-4zM276 232h4v4h-4zM296 216h4v4h-4zM296 220h4v4h-4zM296 224h4v4h-4zM296 232h4v4h-4zM0 264h20v4h-20zM8 268h4v4h-4zM8 272h4v4h-4zM8 276h4v4h-4zM8 280h4v4h-4zM24 264h4v4h-4zM24 268h4v4h-4zM24 272h12v4h-12zM24 276h4v4h-4zM36 276h4v4h-4zM24 280h4v4h-4zM36 280h4v4h-4zM52 268h8v4h-8zM48 272h16v4h-16zM48 276h4v4h-4zM52 280h12v4h-12zM104 264h4v4h-4zM100 268h4v4h-4zM108 268h4v4h-4zM100 272h4v4h-4zM96 276h12v4h-12zM100 280h4v4h-4zM128 264h4v4h-4zM128 272h4v4h-4zM128 276h4v4h-4zM128 280h4v4h-4zM144 268h4v4h-4zM156 268h4v4h-4zM144 272h4v4h-4zM156 272h4v4h-4zM148 276h4v4h-4zM156 276h4v4h-4zM152 280h4v4h-4zM172 268h8v4h-8zM168 272h16v4h-16zM168 276h4v4h-4zM172 280h12v4h-12zM216 264h4v4h-4zM216 268h12v4h-12zM216 272h4v4h-4zM228 272h4v4h-4zM216 276h4v4h-4zM228 276h4v4h-4zM216 280h12v4h-12zM244 268h8v4h-8zM240 272h4v4h-4zM252 272h4v4h-4zM240 276h4v4h-4zM252 276h4v4h-4zM244 280h8v4h-8zM264 268h4v4h-4zM276 268h4v4h-4zM268 272h8v4h-8zM268 276h8v4h-8zM264 280h4v4h-4zM276 280h4v4h-4zM296 264h4v4h-4zM296 272h4v4h-4zM296 276h4v4h-4zM296 280h4v4h-4zM312 268h12v4h-12zM312 272h4v4h-4zM324 272h4v4h-4zM312 276h4v4h-4zM324 276h4v4h-4zM312 280h4v4h-4zM324 280h4v4h-4zM344 264h8v4h-8zM340 268h4v4h-4zM352 268h4v4h-4zM344 272h12v4h-12zM352 276h4v4h-4zM340 280h12v4h-12zM384 268h4v4h-4zM400 268h4v4h-4zM384 272h4v4h-4zM400 272h4v4h-4zM384 276h4v4h-4zM392 276h4v4h-4zM400 276h4v4h-4zM388 280h4v4h-4zM396 280h4v4h-4zM416 264h4v4h-4zM416 272h4v4h-4zM416 276h4v4h-4zM416 280h4v4h-4zM432 268h16v4h-16zM440 272h4v4h-4zM436 276h4v4h-4zM432 280h16v4h-16zM460 268h8v4h-8zM456 272h4v4h-4zM468 272h4v4h-4zM456 276h4v4h-4zM468 276h4v4h-4zM460 280h8v4h-8zM472 280h4v4h-4zM480 268h4v4h-4zM488 268h8v4h-8zM484 272h4v4h-4zM484 276h4v4h-4zM484 280h4v4h-4zM520 264h4v4h-4zM508 268h16v4h-16zM504 272h4v4h-4zM520 272h4v4h-4zM504 276h4v4h-4zM520 276h4v4h-4zM508 280h16v4h-16zM532 268h12v4h-12zM528 272h8v4h-8zM536 276h8v4h-8zM528 280h12v4h-12zM12 288h4v4h-4zM12 296h4v4h-4zM0 300h4v4h-4zM12 300h4v4h-4zM4 304h8v4h-8zM24 292h4v4h-4zM36 292h4v4h-4zM24 296h4v4h-4zM36 296h4v4h-4zM24 300h4v4h-4zM36 300h4v4h-4zM28 304h8v4h-8zM48 292h8v4h-8zM60 292h4v4h-4zM48 296h4v4h-4zM56 296h4v4h-4zM64 296h4v4h-4zM48 300h4v4h-4zM64 300h4v4h-4zM48 304h4v4h-4zM64 304h4v4h-4zM72 292h12v4h-12zM72 296h4v4h-4zM84 296h4v4h-4zM72 300h12v4h-12zM72 304h4v4h-4zM124 292h12v4h-12zM120 296h4v4h-4zM132 296h4v4h-4zM124 300h12v4h-12zM132 304h8v4h-8zM144 292h4v4h-4zM156 292h4v4h-4zM144 296h4v4h-4zM156 296h4v4h-4zM144 300h4v4h-4zM156 300h4v4h-4zM148 304h8v4h-8zM176 288h4v4h-4zM176 296h4v4h-4zM176 300h4v4h-4zM176 304h4v4h-4zM196 292h12v4h-12zM192 296h4v4h-4zM192 300h4v4h-4zM196 304h12v4h-12zM216 288h4v4h-4zM216 292h4v4h-4zM228 292h4v4h-4zM216 296h12v4h-12zM216 300h4v4h-4zM224 300h4v4h-4zM216 304h4v4h-4zM228 304h4v4h-4zM244 288h4v4h-4zM244 292h4v4h-4zM244 296h4v4h-4zM244 300h4v4h-4zM248 304h8v4h-8zM264 292h4v4h-4zM276 292h4v4h-4zM268 296h4v4h-4zM276 296h4v4h-4zM272 300h4v4h-4zM264 304h8v4h-8zM296 304h4v4h-4zM0 336h16v4h-16zM0 340h4v4h-4zM16 340h4v4h-4zM0 344h4v4h-4zM16 344h4v4h-4zM0 348h16v4h-16zM0 352h4v4h-4zM28 340h8v4h-8zM24 344h4v4h-4zM36 344h4v4h-4zM24 348h4v4h-4zM36 348h4v4h-4zM28 352h8v4h-8zM40 352h4v4h-4zM52 340h12v4h-12zM48 344h4v4h-4zM48 348h4v4h-4zM52 352h12v4h-12zM72 336h4v4h-4zM72 340h4v4h-4zM84 340h4v4h-4zM72 344h12v4h-12zM72 348h4v4h-4zM80 348h4v4h-4zM72 352h4v4h-4zM84 352h4v4h-4zM120 340h8v4h-8zM132 340h4v4h-4zM120 344h4v4h-4zM128 344h4v4h-4zM136 344h4v4h-4zM120 348h4v4h-4zM136 348h4v4h-4zM120 352h4v4h-4zM136 352h4v4h-4zM144 340h4v4h-4zM156 340h4v4h-4zM148 344h4v4h-4zM156 344h4v4h-4zM152 348h4v4h-4zM144 352h8v4h-8zM192 336h4v4h-4zM192 340h12v4h-12zM192 344h4v4h-4zM204 344h4v4h-4zM192 348h4v4h-4zM204 348h4v4h-4zM192 352h12v4h-12zM220 340h8v4h-8zM216 344h4v4h-4zM228 344h4v4h-4zM216 348h4v4h-4zM228 348h4v4h-4zM220 352h8v4h-8zM240 340h4v4h-4zM252 340h4v4h-4zM244 344h8v4h-8zM244 348h8v4h-8zM240 352h4v4h-4zM252 352h4v4h-4zM288 340h4v4h-4zM304 340h4v4h-4zM288 344h4v4h-4zM304 344h4v4h-4zM288 348h4v4h-4zM296 348h4v4h-4zM304 348h4v4h-4zM292 352h4v4h-4zM300 352h4v4h-4zM320 336h4v4h-4zM320 344h4v4h-4zM320 348h4v4h-4zM320 352h4v4h-4zM344 336h4v4h-4zM340 340h12v4h-12zM344 344h4v4h-4zM344 348h4v4h-4zM348 352h4v4h-4zM360 336h4v4h-4zM360 340h4v4h-4zM360 344h12v4h-12zM360 348h4v4h-4zM372 348h4v4h-4zM360 352h4v4h-4zM372 352h4v4h-4zM416 336h4v4h-4zM412 340h4v4h-4zM420 340h4v4h-4zM412 344h4v4h-4zM408 348h12v4h-12zM412 352h4v4h-4zM440 336h4v4h-4zM440 344h4v4h-4zM440 348h4v4h-4zM440 352h4v4h-4zM456 340h4v4h-4zM468 340h4v4h-4zM456 344h4v4h-4zM468 344h4v4h-4zM460 348h4v4h-4zM468 348h4v4h-4zM464 352h4v4h-4zM484 340h8v4h-8zM480 344h16v4h-16zM480 348h4v4h-4zM484 352h12v4h-12zM16 360h4v4h-4zM4 364h16v4h-16zM0 368h4v4h-4zM16 368h4v4h-4zM0 372h4v4h-4zM16 372h4v4h-4zM4 376h16v4h-16zM28 364h8v4h-8zM24 368h4v4h-4zM36 368h4v4h-4zM24 372h4v4h-4zM36 372h4v4h-4zM28 376h8v4h-8zM48 364h16v4h-16zM56 368h4v4h-4zM52 372h4v4h-4zM48 376h16v4h-16zM76 364h8v4h-8zM72 368h16v4h-16zM72 372h4v4h-4zM76 376h12v4h-12zM96 364h12v4h-12zM96 368h4v4h-4zM108 368h4v4h-4zM96 372h4v4h-4zM108 372h4v4h-4zM96 376h4v4h-4zM108 376h4v4h-4zM148 360h4v4h-4zM148 364h4v4h-4zM148 368h4v4h-4zM148 372h4v4h-4zM152 376h8v4h-8zM176 360h4v4h-4zM176 368h4v4h-4zM176 372h4v4h-4zM176 376h4v4h-4zM196 364h12v4h-12zM192 368h4v4h-4zM204 368h4v4h-4zM196 372h12v4h-12zM204 376h8v4h-8zM216 364h4v4h-4zM228 364h4v4h-4zM216 368h4v4h-4zM228 368h4v4h-4zM216 372h4v4h-4zM228 372h4v4h-4zM220 376h8v4h-8zM244 364h8v4h-8zM240 368h4v4h-4zM252 368h4v4h-4zM240 372h4v4h-4zM252 372h4v4h-4zM244 376h8v4h-8zM264 364h4v4h-4zM272 364h8v4h-8zM268 368h4v4h-4zM268 372h4v4h-4zM268 376h4v4h-4zM324 360h4v4h-4zM324 368h4v4h-4zM312 372h4v4h-4zM324 372h4v4h-4zM316 376h8v4h-8zM336 364h4v4h-4zM348 364h4v4h-4zM336 368h4v4h-4zM348 368h4v4h-4zM336 372h4v4h-4zM348 372h4v4h-4zM340 376h8v4h-8zM368 360h8v4h-8zM364 364h4v4h-4zM376 364h4v4h-4zM368 368h12v4h-12zM376 372h4v4h-4zM364 376h12v4h-12zM388 364h12v4h-12zM384 368h8v4h-8zM392 372h8v4h-8zM384 376h12v4h-12zM416 376h4v4h-4z"/></svg></div>
<div class="box" style="left:901px;top:496px;width:646px;height:220px"></div>
<h2 style="left:912px;top:509px">Source Text</h2>
<div class="ta" style="left:912px;top:535px;width:623px;height:160px;padding:4px 8px">ABCDEFGHIJKLMNOPQRSTUVWXYZ
abcdefghijklmnopqrstuvwxyz
0123456789+-=!?_.,;:&#x27;&quot;@#$|
%&amp;*^`~()[]{}/\&lt;&gt;

The quick brown fox jumps
over the lazy dog.

Sphinx of Black Quartz,
judge my vow!</div>
<!-- fake scrollbar -->
<div class="abs" style="left:1519px;top:536px;width:15px;height:158px;background:#fafafa"></div>
<div class="abs" style="left:1519px;top:679px;width:15px;height:1px;background:#dcdcdc"></div>
<svg class="abs" style="left:1519px;top:536px" width="15" height="158" viewBox="0 0 15 158">
<path d="M3 11L7.5 6L12 11z" fill="#8b8b8b"/>
<rect x="3" y="18" width="9" height="68" rx="4.5" fill="#8b8b8b"/>
<path d="M3 131L7.5 136L12 131z" fill="#8b8b8b"/>
</svg>

<svg class="abs" style="left:1526px;top:686px" width="7" height="7" viewBox="0 0 7 7" shape-rendering="crispEdges"><path fill="#555" d="M0 6h1v1h-1zM1 5h1v1h-1zM2 4h1v1h-1zM3 3h1v1h-1zM4 2h1v1h-1zM5 1h1v1h-1zM6 0h1v1h-1zM4 6h1v1h-1zM5 5h1v1h-1zM6 4h1v1h-1z"/></svg>

<!-- right panel 2 : settings -->
<div class="panel" style="left:888px;top:769px;width:672px;height:130px"></div>
<h2 style="left:901px;top:788px">Interpretation Settings</h2>
<div class="box" style="left:901px;top:819px;width:646px;height:57px"></div>
<div class="lbl" style="left:912px;top:837px">Byte Direction:</div>
<div class="sel2" style="left:1021px;top:834px;width:118px;height:27px;padding:5px 12px">Vertical</div>
<svg class="abs" style="left:1124px;top:843px" width="12" height="8" viewBox="0 0 12 8"><path d="M2 1.5L6 5.5L10 1.5" stroke="#e0e0e0" stroke-width="2" fill="none"/></svg>
<div class="lbl" style="left:1148.3px;top:837px">Width Mode:</div>
<div class="sel2" style="left:1243px;top:834px;width:150px;height:27px;padding:5px 12px">Fixed Width</div>
<svg class="abs" style="left:1378px;top:843px" width="12" height="8" viewBox="0 0 12 8"><path d="M2 1.5L6 5.5L10 1.5" stroke="#e0e0e0" stroke-width="2" fill="none"/></svg>

<!-- right panel 3 : samples -->
<div class="panel" style="left:888px;top:919px;width:672px;height:200px"></div>
<h2 style="left:901px;top:938px">Load Sample Fonts</h2>
<div class="box" style="left:901px;top:969px;width:646px;height:100px"></div>
<div class="sel2" style="left:912px;top:989px;width:198px;height:27px"></div>
<div class="btn" style="left:1122px;top:986px;width:143px;height:33px"></div>

</body></html>
